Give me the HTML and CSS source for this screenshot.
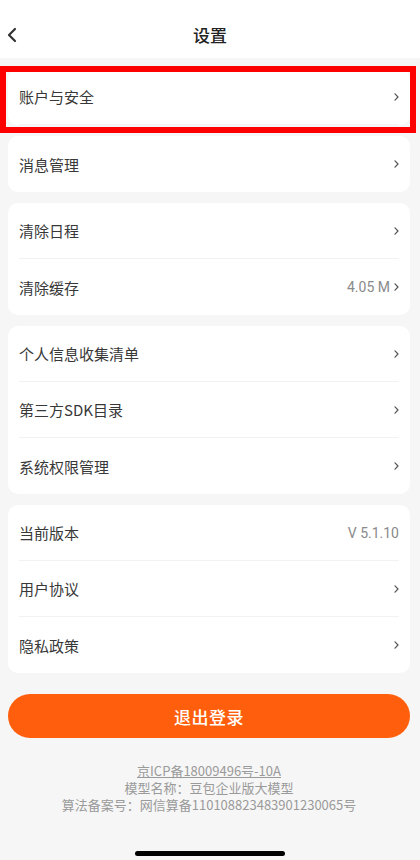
FILE: index.html
```html
<!DOCTYPE html>
<html lang="zh-CN">
<head>
    <meta charset="UTF-8">
    <meta name="viewport" content="width=device-width, initial-scale=1.0">
    <title>设置</title>
    <link rel="stylesheet" href="styles.css">
</head>
<body>
    <div class="header">
        <svg class="back" width="12" height="16" viewBox="0 0 12 16"><path d="M9 2 L3 8 L9 14" fill="none" stroke="#333" stroke-width="2.2" stroke-linecap="round" stroke-linejoin="round"/></svg>
        <h1>设置</h1>
    </div>

    <div class="content">
        <div class="card">
            <div class="row">
                <span class="label">账户与安全</span>
                <span class="right"><svg class="arrow" width="7" height="10" viewBox="0 0 7 10"><path d="M2 1.8 L5 5 L2 8.2" fill="none" stroke="#555" stroke-width="1.2" stroke-linecap="round" stroke-linejoin="round"/></svg></span>
            </div>
            <div class="highlight"></div>
        </div>

        <div class="card">
            <div class="row">
                <span class="label">消息管理</span>
                <span class="right"><svg class="arrow" width="7" height="10" viewBox="0 0 7 10"><path d="M2 1.8 L5 5 L2 8.2" fill="none" stroke="#555" stroke-width="1.2" stroke-linecap="round" stroke-linejoin="round"/></svg></span>
            </div>
        </div>

        <div class="card">
            <div class="row">
                <span class="label">清除日程</span>
                <span class="right"><svg class="arrow" width="7" height="10" viewBox="0 0 7 10"><path d="M2 1.8 L5 5 L2 8.2" fill="none" stroke="#555" stroke-width="1.2" stroke-linecap="round" stroke-linejoin="round"/></svg></span>
            </div>
            <div class="row">
                <span class="label">清除缓存</span>
                <span class="right"><span class="value">4.05 M</span><svg class="arrow" width="7" height="10" viewBox="0 0 7 10"><path d="M2 1.8 L5 5 L2 8.2" fill="none" stroke="#555" stroke-width="1.2" stroke-linecap="round" stroke-linejoin="round"/></svg></span>
            </div>
        </div>

        <div class="card">
            <div class="row">
                <span class="label">个人信息收集清单</span>
                <span class="right"><svg class="arrow" width="7" height="10" viewBox="0 0 7 10"><path d="M2 1.8 L5 5 L2 8.2" fill="none" stroke="#555" stroke-width="1.2" stroke-linecap="round" stroke-linejoin="round"/></svg></span>
            </div>
            <div class="row">
                <span class="label">第三方SDK目录</span>
                <span class="right"><svg class="arrow" width="7" height="10" viewBox="0 0 7 10"><path d="M2 1.8 L5 5 L2 8.2" fill="none" stroke="#555" stroke-width="1.2" stroke-linecap="round" stroke-linejoin="round"/></svg></span>
            </div>
            <div class="row">
                <span class="label">系统权限管理</span>
                <span class="right"><svg class="arrow" width="7" height="10" viewBox="0 0 7 10"><path d="M2 1.8 L5 5 L2 8.2" fill="none" stroke="#555" stroke-width="1.2" stroke-linecap="round" stroke-linejoin="round"/></svg></span>
            </div>
        </div>

        <div class="card">
            <div class="row">
                <span class="label">当前版本</span>
                <span class="right"><span class="value">V 5.1.10</span></span>
            </div>
            <div class="row">
                <span class="label">用户协议</span>
                <span class="right"><svg class="arrow" width="7" height="10" viewBox="0 0 7 10"><path d="M2 1.8 L5 5 L2 8.2" fill="none" stroke="#555" stroke-width="1.2" stroke-linecap="round" stroke-linejoin="round"/></svg></span>
            </div>
            <div class="row">
                <span class="label">隐私政策</span>
                <span class="right"><svg class="arrow" width="7" height="10" viewBox="0 0 7 10"><path d="M2 1.8 L5 5 L2 8.2" fill="none" stroke="#555" stroke-width="1.2" stroke-linecap="round" stroke-linejoin="round"/></svg></span>
            </div>
        </div>

        <button class="logout">退出登录</button>

        <div class="footer">
            <a class="icp">京ICP备18009496号-10A</a>
            <p>模型名称：豆包企业版大模型</p>
            <p>算法备案号：网信算备110108823483901230065号</p>
        </div>
    </div>

    <div class="home-bar"></div>
</body>
</html>
```

FILE: styles.css
```css
body {
    font-family: "Noto Sans CJK SC", Roboto, "Noto Sans", sans-serif;
    background-color: #f6f6f6;
    margin: 0;
    padding: 0;
    width: 420px;
    height: 860px;
    display: flex;
    flex-direction: column;
    color: #333;
}
.header {
    height: 58px;
    background-color: #fff;
    display: flex;
    align-items: center;
    justify-content: center;
    position: relative;
}
.header h1 {
    font-size: 17px;
    font-weight: 500;
    color: #222;
    margin: 0;
    padding-top: 10px;
}
.back {
    position: absolute;
    left: 6px;
    top: 27px;
}
.content {
    flex: 1;
    padding: 11px 10px 0 8px;
    display: flex;
    flex-direction: column;
}
.card {
    background-color: #fff;
    border-radius: 10px;
    margin-bottom: 11px;
    padding: 0 11px;
    position: relative;
}
.row {
    height: 56px;
    display: flex;
    align-items: center;
    justify-content: space-between;
    border-bottom: 1px solid #f2f2f2;
    box-sizing: border-box;
}
.row:last-child {
    border-bottom: none;
}
.label {
    font-size: 15px;
    color: #383838;
}
.right {
    display: flex;
    align-items: center;
    gap: 3px;
}
.value {
    font-size: 14px;
    color: #8a8a8a;
    font-family: Roboto, "Noto Sans", sans-serif;
}
.arrow {
    margin-right: -1px;
}
.highlight {
    position: absolute;
    left: -8px;
    right: -6px;
    top: -3px;
    bottom: -8px;
    border: 6px solid #ff0000;
    pointer-events: none;
}
.logout {
    margin-top: 10px;
    height: 44px;
    border: none;
    border-radius: 22px;
    background-color: #ff5f0d;
    color: #fff;
    font-family: "Noto Sans CJK SC", sans-serif;
    font-size: 17px;
    font-weight: 500;
    letter-spacing: 0.5px;
}
.footer {
    margin-top: 24px;
    text-align: center;
    font-size: 13px;
    color: #9a9a9a;
    line-height: 17px;
}
.footer p {
    margin: 0;
}
.icp {
    text-decoration: underline;
    display: inline-block;
}
.home-bar {
    width: 150px;
    height: 5px;
    border-radius: 3px;
    background-color: #000;
    margin: 0 auto 4px;
}
```
